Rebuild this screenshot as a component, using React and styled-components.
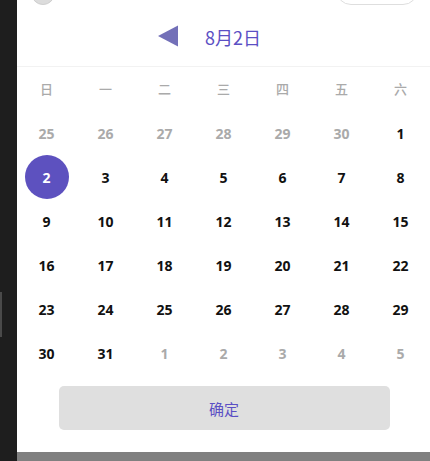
import React from "react";
import styled, { createGlobalStyle } from "styled-components";

const Global = createGlobalStyle`
  html, body { margin: 0; padding: 0; background: #1e1e1e; }
  body { font-family: "Open Sans", "Noto Sans CJK SC", sans-serif; }
  * { box-sizing: border-box; }
`;

const Page = styled.div`
  display: flex;
  width: 430px;
  height: 461px;
  overflow: hidden;
`;

const Side = styled.div`
  width: 17px;
  flex: none;
  background: #1e1e1e;
  display: flex;
  flex-direction: column;
`;

const Thumb = styled.div`
  margin-top: 292px;
  width: 2px;
  height: 45px;
  background: #4a4a4a;
`;

const Column = styled.div`
  flex: 1;
  display: flex;
  flex-direction: column;
`;

const Panel = styled.div`
  flex: 1;
  background: #fff;
  display: flex;
  flex-direction: column;
`;

const TopPeek = styled.div`
  height: 5px;
  overflow: hidden;
  display: flex;
  justify-content: space-between;
  align-items: flex-end;
  padding: 0 12px 0 14px;
`;

const PeekCircle = styled.div`
  width: 24px;
  height: 24px;
  border-radius: 50%;
  background: #dcdcdc;
  border: 1px solid #cfcfcf;
  flex: none;
`;

const PeekPill = styled.div`
  width: 82px;
  height: 30px;
  border-radius: 15px;
  border: 1px solid #dedede;
  background: #fff;
  flex: none;
`;

const Header = styled.div`
  height: 62px;
  border-bottom: 1px solid #f2f2f2;
  display: flex;
  align-items: center;
  padding-left: 141px;
  gap: 26px;
`;

const Title = styled.span`
  font-family: "Noto Sans CJK SC", sans-serif;
  font-size: 18px;
  color: #5b4fc4;
  line-height: 1;
  margin-top: 2px;
`;

const Grid = styled.div`
  display: grid;
  grid-template-columns: repeat(7, 1fr);
  grid-auto-rows: 44px;
`;

const Week = styled.div`
  display: flex;
  align-items: center;
  justify-content: center;
  font-family: "Noto Sans CJK SC", sans-serif;
  font-weight: 500;
  font-size: 13px;
  color: #aaaaaa;
  padding-bottom: 1px;
`;

const Day = styled.div`
  display: flex;
  align-items: center;
  justify-content: center;
  font-family: "Open Sans", sans-serif;
  font-weight: 700;
  font-size: 14px;
  color: ${(p) => (p.$other ? "#aaaaaa" : "#111111")};
`;

const Selected = styled.span`
  width: 44px;
  height: 44px;
  border-radius: 50%;
  background: #5d51bf;
  color: #fff;
  display: flex;
  align-items: center;
  justify-content: center;
`;

const Footer = styled.div`
  display: flex;
  justify-content: center;
  padding-top: 11px;
`;

const Confirm = styled.button`
  width: 331px;
  height: 44px;
  margin-left: 1px;
  border: none;
  border-radius: 5px;
  background: #dfdfdf;
  color: #5b4fc4;
  font-family: "Noto Sans CJK SC", sans-serif;
  font-size: 15px;
  padding: 0;
`;

const BottomBar = styled.div`
  height: 9px;
  background: #808080;
`;

const weeks = ["日", "一", "二", "三", "四", "五", "六"];

const days = [
  ...[25, 26, 27, 28, 29, 30].map((d) => ({ d, other: true })),
  ...Array.from({ length: 31 }, (_, i) => ({ d: i + 1 })),
  ...[1, 2, 3, 4, 5].map((d) => ({ d, other: true })),
];

export default function App() {
  return (
    <>
      <Global />
      <Page>
        <Side>
          <Thumb />
        </Side>
        <Column>
          <Panel>
            <TopPeek>
              <PeekCircle />
              <PeekPill />
            </TopPeek>
            <Header>
              <svg width="21" height="22" viewBox="0 0 21 22">
                <path d="M0 11 L20 0.5 L20 21.5 Z" fill="#7370b8" />
              </svg>
              <Title>8月2日</Title>
            </Header>
            <Grid>
              {weeks.map((w) => (
                <Week key={w}>{w}</Week>
              ))}
              {days.map((x, i) => (
                <Day key={i} $other={x.other}>
                  {!x.other && x.d === 2 ? <Selected>2</Selected> : x.d}
                </Day>
              ))}
            </Grid>
            <Footer>
              <Confirm>确定</Confirm>
            </Footer>
          </Panel>
          <BottomBar />
        </Column>
      </Page>
    </>
  );
}
